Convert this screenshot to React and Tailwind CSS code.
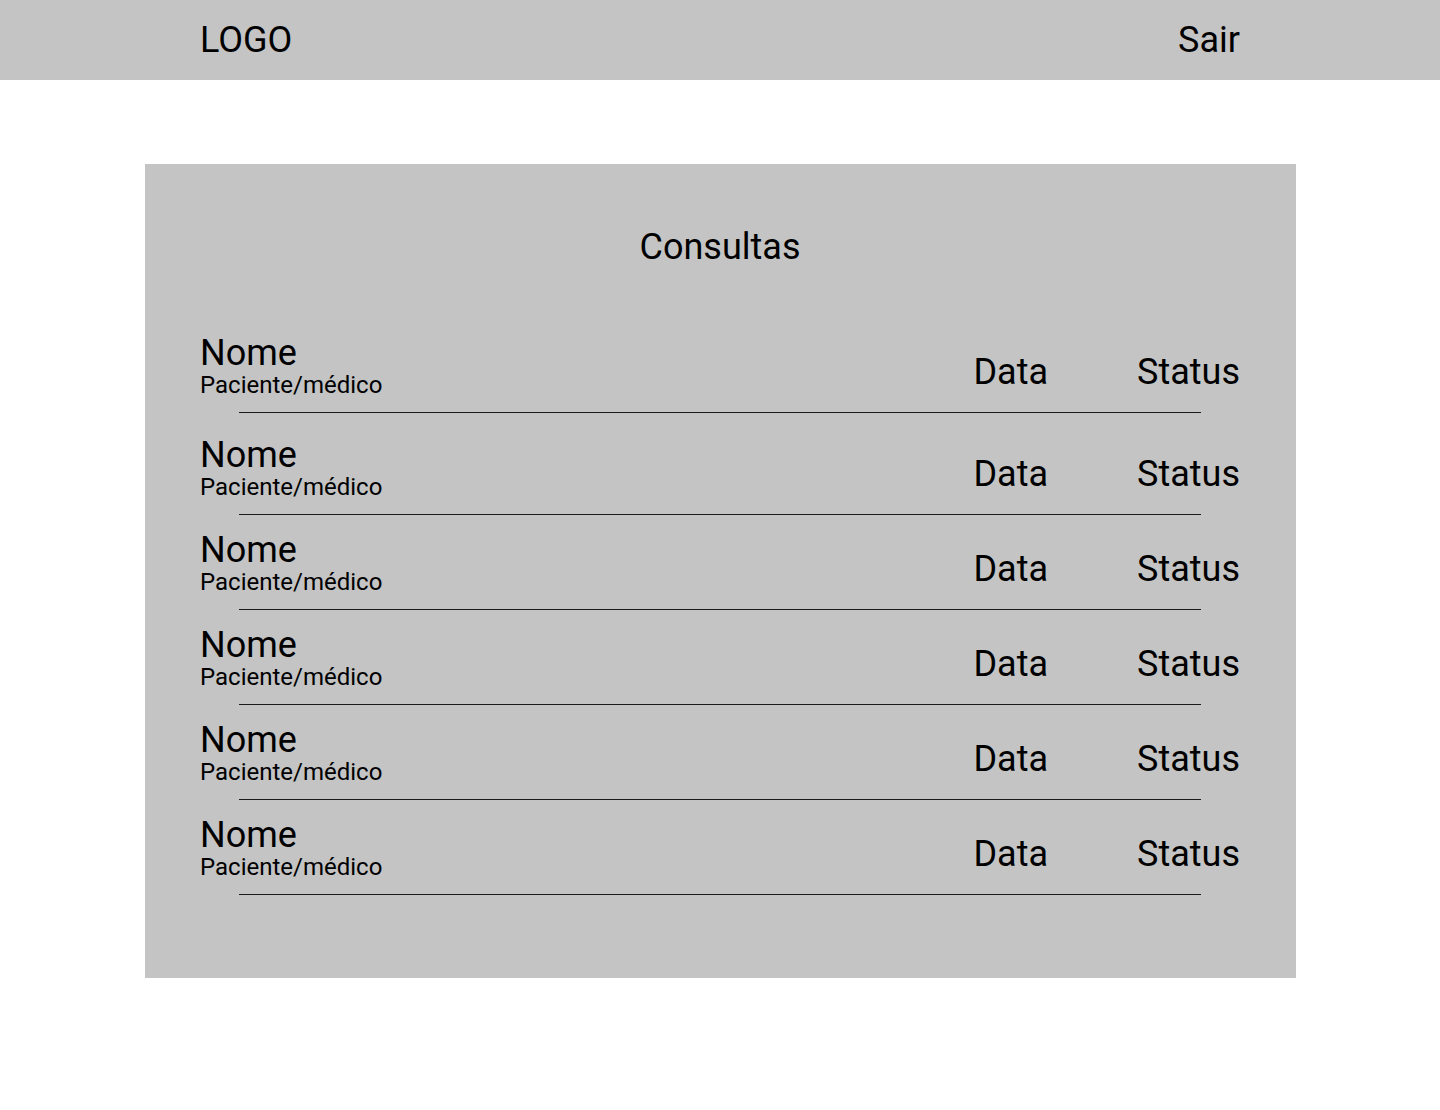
const consultas = [
    { nome: 'Nome', sub: 'Paciente/médico', data: 'Data', status: 'Status' },
    { nome: 'Nome', sub: 'Paciente/médico', data: 'Data', status: 'Status' },
    { nome: 'Nome', sub: 'Paciente/médico', data: 'Data', status: 'Status' },
    { nome: 'Nome', sub: 'Paciente/médico', data: 'Data', status: 'Status' },
    { nome: 'Nome', sub: 'Paciente/médico', data: 'Data', status: 'Status' },
    { nome: 'Nome', sub: 'Paciente/médico', data: 'Data', status: 'Status' },
];

const ConsultaRow = ({ item, first }) => (
    <div className={first ? 'mb-[7px]' : ''}>
        <div className="flex items-end justify-between">
            <div>
                <p className="text-[36px] leading-[36px]">{item.nome}</p>
                <p className="text-[24px] leading-[28px]">{item.sub}</p>
            </div>
            <div className="flex gap-[89px] pb-[6px] text-[36px] leading-[42px]">
                <span>{item.data}</span>
                <span>{item.status}</span>
            </div>
        </div>
        <div className="mx-[39px] mt-[13px] h-px bg-[#1a1a1a]" />
    </div>
);

const App = () => {
    return (
        <div className="min-h-[1110px] bg-white text-black font-['Roboto',sans-serif]">
            {/* HEADER */}
            <header className="h-[80px] bg-[#c4c4c4] flex items-center justify-between pl-[200px] pr-[200px]">
                <span className="text-[36px] leading-[42px]">LOGO</span>
                <span className="text-[36px] leading-[42px]">Sair</span>
            </header>

            {/* CONSULTAS */}
            <main className="pt-[84px]">
                <section className="ml-[145px] w-[1151px] h-[814px] bg-[#c4c4c4] pt-[62px] pl-[55px] pr-[56px]">
                    <h1 className="text-center text-[36px] leading-[42px] mb-[67px]">Consultas</h1>
                    <div className="flex flex-col gap-[17px]">
                        {consultas.map((c, i) => (
                            <ConsultaRow key={i} item={c} first={i === 0} />
                        ))}
                    </div>
                </section>
            </main>
        </div>
    );
};

export default App;
